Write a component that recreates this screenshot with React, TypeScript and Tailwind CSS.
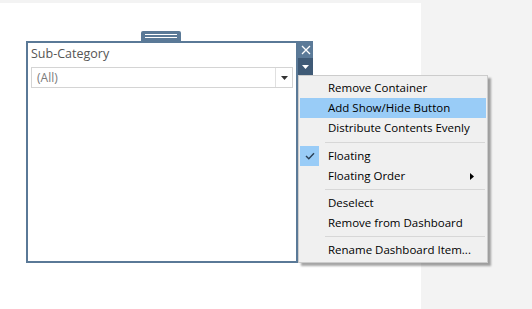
import React from 'react';

type MenuEntry = { label: string; checked?: boolean; active?: boolean; submenu?: boolean } | 'sep';

const entries: MenuEntry[] = [
    { label: 'Remove Container' },
    { label: 'Add Show/Hide Button', active: true },
    { label: 'Distribute Contents Evenly' },
    'sep',
    { label: 'Floating', checked: true },
    { label: 'Floating Order', submenu: true },
    'sep',
    { label: 'Deselect' },
    { label: 'Remove from Dashboard' },
    'sep',
    { label: 'Rename Dashboard Item...' },
];

const font = { fontFamily: '"Open Sans", "Noto Sans", sans-serif' };

const ContextMenu: React.FC = () => (
    <div className="relative z-10 w-[190px] border border-[#cccccc] bg-[#f0f0f0] py-[2px] shadow-[3px_3px_2px_rgba(0,0,0,0.35)]">
        {entries.map((e, i) =>
            e === 'sep' ? (
                <div key={i} className={`flex items-center pl-[26px] pr-[2px] ${i === 3 ? 'h-[8px]' : 'h-[7px]'}`}>
                    <div className="h-px w-full bg-[#d7d7d7]" />
                </div>
            ) : (
                <div
                    key={i}
                    className={`mx-[1px] flex h-[20px] items-center text-[11.5px] text-black ${e.active ? 'bg-[#99ccf7]' : ''}`}
                >
                    <div className={`flex h-[20px] w-[19px] items-center justify-center ${e.checked ? 'bg-[#99ccf7]' : ''}`}>
                        {e.checked && (
                            <svg width="10" height="8" viewBox="0 0 10 8">
                                <path d="M1 4 L3.8 6.8 L9 1.2" fill="none" stroke="#2a3f55" strokeWidth="1.4" />
                            </svg>
                        )}
                    </div>
                    <span className="ml-[9px] flex-1 leading-none">{e.label}</span>
                    {e.submenu && (
                        <svg width="4" height="7" viewBox="0 0 4 7" className="mr-[12px]">
                            <path d="M0 0 L4 3.5 L0 7 Z" fill="#000" />
                        </svg>
                    )}
                </div>
            )
        )}
    </div>
);

export default function App() {
    return (
        <div className="flex h-[309px] w-[532px] bg-[#f3f3f3]" style={font}>
            <div className="mt-[3px] w-[421px] bg-white">
                <div className="ml-[26px] mt-[28px] flex">
                    <div className="flex flex-col">
                        <div className="ml-[115px] flex h-[10px] w-[40px] flex-col items-center justify-center gap-[2px] rounded-t-[2px] bg-[#5a7997]">
                            <div className="h-px w-[32px] bg-white" />
                            <div className="h-px w-[32px] bg-white" />
                        </div>
                        <div className="h-[222px] w-[272px] border-2 border-[#5a7997] bg-white px-[3px] pt-[2px]">
                            <div className="text-[12.5px] leading-[18px] text-[#555555]">Sub-Category</div>
                            <div className="mt-[4px] flex h-[21px] items-stretch border border-[#d4d4d4] bg-white">
                                <div className="flex flex-1 items-center pl-[5px] text-[12px] text-[#7a7a7a]">(All)</div>
                                <div className="flex w-[17px] items-center justify-center border-l border-[#e0e0e0]">
                                    <svg width="7" height="4" viewBox="0 0 7 4">
                                        <path d="M0 0 H7 L3.5 4 Z" fill="#333" />
                                    </svg>
                                </div>
                            </div>
                        </div>
                    </div>
                    <div className="mt-[10px] flex flex-col">
                        <div className="flex h-[17px] w-[15px] items-center justify-center bg-[#5b7a98]">
                            <svg width="10" height="10" viewBox="0 0 10 10">
                                <path d="M1 1 L9 9 M9 1 L1 9" stroke="#fff" strokeWidth="1.3" />
                            </svg>
                        </div>
                        <div className="flex h-[17px] w-[15px] items-center justify-center bg-[#3f5a76]">
                            <svg width="7" height="4" viewBox="0 0 7 4">
                                <path d="M0 0 H7 L3.5 4 Z" fill="#fff" />
                            </svg>
                        </div>
                        <ContextMenu />
                    </div>
                </div>
            </div>
        </div>
    );
}
